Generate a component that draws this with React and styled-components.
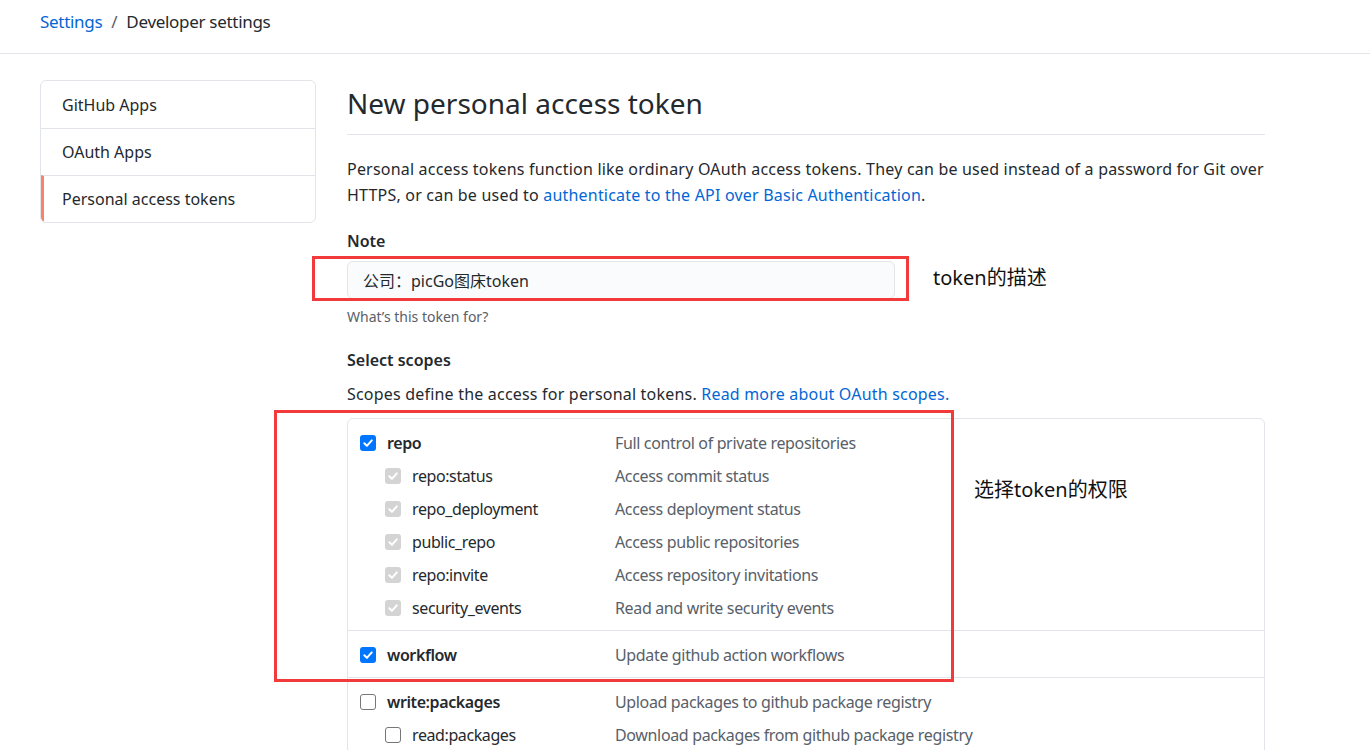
import styled, { createGlobalStyle } from 'styled-components'

const GlobalStyle = createGlobalStyle`
  body {
    margin: 0;
    background: #fff;
    color: #24292e;
    font-family: "Segoe UI", "Noto Sans", "Noto Sans CJK SC", sans-serif;
  }
  * { box-sizing: border-box; }
`

const SIDE_ITEMS = ['GitHub Apps', 'OAuth Apps', 'Personal access tokens']

const SCOPE_GROUPS = [
  {
    name: 'repo', desc: 'Full control of private repositories', checked: true,
    children: [
      ['repo:status', 'Access commit status'],
      ['repo_deployment', 'Access deployment status'],
      ['public_repo', 'Access public repositories'],
      ['repo:invite', 'Access repository invitations'],
      ['security_events', 'Read and write security events'],
    ],
  },
  { name: 'workflow', desc: 'Update github action workflows', checked: true, children: [] },
  {
    name: 'write:packages', desc: 'Upload packages to github package registry', checked: false,
    children: [['read:packages', 'Download packages from github package registry']],
  },
  { name: 'delete:packages', desc: 'Delete packages from github package registry', checked: false, children: [] },
]

function CheckMark() {
  return (
    <svg width="12" height="12" viewBox="0 0 12 12">
      <path d="M2.3 6.3 L4.9 8.8 L9.8 3.4" fill="none" stroke="#fff" strokeWidth="2" strokeLinecap="round" strokeLinejoin="round" />
    </svg>
  )
}

function Check({ state }) {
  return <Box $state={state}>{state !== 'off' && <CheckMark />}</Box>
}

export default function App() {
  return (
    <>
      <GlobalStyle />
      <Header>
        <Crumb href="#">Settings</Crumb>
        <Sep>/</Sep>
        <span>Developer settings</span>
      </Header>
      <Layout>
        <SideNav>
          {SIDE_ITEMS.map((item, i) => (
            <SideItem key={item} $active={i === SIDE_ITEMS.length - 1}>{item}</SideItem>
          ))}
        </SideNav>
        <Main>
          <Title>New personal access token</Title>
          <Intro>
            Personal access tokens function like ordinary OAuth access tokens. They can be used instead of a password for Git over
            HTTPS, or can be used to <Link href="#">authenticate to the API over Basic Authentication</Link>.
          </Intro>

          <Label>Note</Label>
          <NoteField>
            <Input readOnly value="公司：picGo图床token" />
            <RedFrame $top={-5} $left={-35} $width={597} $height={45} />
            <Annotation $top={1} $left={586}>token的描述</Annotation>
          </NoteField>
          <Hint>What’s this token for?</Hint>

          <Label $mt={22}>Select scopes</Label>
          <ScopeIntro>
            Scopes define the access for personal tokens. <Link href="#">Read more about OAuth scopes.</Link>
          </ScopeIntro>

          <ScopeBox>
            <RedFrame $top={-9} $left={-74} $width={680} $height={272} />
            <Annotation $top={55} $left={626}>选择token的权限</Annotation>
            {SCOPE_GROUPS.map((g) => (
              <Group key={g.name}>
                <Row>
                  <Cell>
                    <Check state={g.checked ? 'on' : 'off'} />
                    <ScopeName $strong>{g.name}</ScopeName>
                  </Cell>
                  <Desc>{g.desc}</Desc>
                </Row>
                {g.children.map(([name, desc]) => (
                  <Row key={name} $sub>
                    <Cell>
                      <Check state={g.checked ? 'disabled' : 'off'} />
                      <ScopeName>{name}</ScopeName>
                    </Cell>
                    <Desc>{desc}</Desc>
                  </Row>
                ))}
              </Group>
            ))}
          </ScopeBox>
        </Main>
      </Layout>
    </>
  )
}

const Header = styled.div`
  height: 54px;
  padding: 0 40px 10px;
  display: flex;
  align-items: center;
  gap: 9px;
  border-bottom: 1px solid #e1e4e8;
  font-size: 17px;
  letter-spacing: -0.3px;
  color: #24292e;
`

const Crumb = styled.a`
  color: #0366d6;
  text-decoration: none;
`

const Sep = styled.span`
  color: #586069;
`

const Layout = styled.div`
  display: grid;
  grid-template-columns: 276px 918px;
  gap: 31px;
  padding: 26px 40px 0;
`

const SideNav = styled.nav`
  align-self: start;
  border: 1px solid #e1e4e8;
  border-radius: 6px;
  overflow: hidden;
`

const SideItem = styled.div`
  height: 47px;
  display: flex;
  align-items: center;
  padding-left: ${(p) => (p.$active ? '18px' : '21px')};
  border-left: ${(p) => (p.$active ? '3px solid #f9826c' : 'none')};
  font-size: 16px;
  color: #24292e;
  & + & { border-top: 1px solid #e1e4e8; }
`

const Main = styled.div`
  display: flex;
  flex-direction: column;
`

const Title = styled.h2`
  margin: 0;
  height: 55px;
  padding-top: 3px;
  font-size: 28px;
  font-weight: 400;
  line-height: 40px;
  border-bottom: 1px solid #e1e4e8;
`

const Intro = styled.p`
  margin: 21px 0 0;
  font-size: 16px;
  line-height: 26px;
  letter-spacing: 0.2px;
`

const Link = styled.a`
  color: #0366d6;
  text-decoration: none;
`

const Label = styled.div`
  margin-top: ${(p) => p.$mt || 21}px;
  font-size: 16px;
  font-weight: 600;
  line-height: 24px;
`

const NoteField = styled.div`
  position: relative;
  margin-top: 8px;
  width: 548px;
`

const Input = styled.input`
  width: 100%;
  height: 38px;
  padding: 0 15px;
  border: 1px solid #e1e4e8;
  border-radius: 6px;
  background: #fafbfc;
  font-family: inherit;
  font-size: 16px;
  color: #24292e;
  outline: none;
`

const RedFrame = styled.div`
  position: absolute;
  top: ${(p) => p.$top}px;
  left: ${(p) => p.$left}px;
  width: ${(p) => p.$width}px;
  height: ${(p) => p.$height}px;
  border: 3px solid #f23a3a;
  pointer-events: none;
`

const Annotation = styled.div`
  position: absolute;
  top: ${(p) => p.$top}px;
  left: ${(p) => p.$left}px;
  white-space: nowrap;
  font-size: 20px;
  color: #111;
`

const Hint = styled.div`
  margin-top: 8px;
  font-size: 14px;
  color: #586069;
`

const ScopeIntro = styled.div`
  margin-top: 10px;
  font-size: 16px;
  line-height: 24px;
  letter-spacing: 0.2px;
`

const ScopeBox = styled.div`
  position: relative;
  margin-top: 12px;
  border: 1px solid #e1e4e8;
  border-radius: 6px;
`

const Group = styled.div`
  padding: 7px 0 6px;
  & + & { border-top: 1px solid #e1e4e8; }
`

const Row = styled.div`
  height: 33px;
  display: grid;
  grid-template-columns: ${(p) => (p.$sub ? '230px' : '255px')} 1fr;
  align-items: center;
  padding-left: ${(p) => (p.$sub ? '37px' : '12px')};
`

const Cell = styled.div`
  display: flex;
  align-items: center;
  gap: 11px;
`

const Box = styled.span`
  width: 16px;
  height: 16px;
  flex: none;
  display: inline-flex;
  align-items: center;
  justify-content: center;
  border-radius: 3px;
  background: ${(p) => (p.$state === 'on' ? '#0075ff' : p.$state === 'disabled' ? '#d4d4d4' : '#fff')};
  border: ${(p) => (p.$state === 'off' ? '1px solid #767676' : 'none')};
`

const ScopeName = styled.span`
  font-size: 16px;
  letter-spacing: -0.4px;
  font-weight: ${(p) => (p.$strong ? 600 : 400)};
  color: #24292e;
`

const Desc = styled.span`
  font-size: 16px;
  letter-spacing: -0.35px;
  color: #586069;
`
